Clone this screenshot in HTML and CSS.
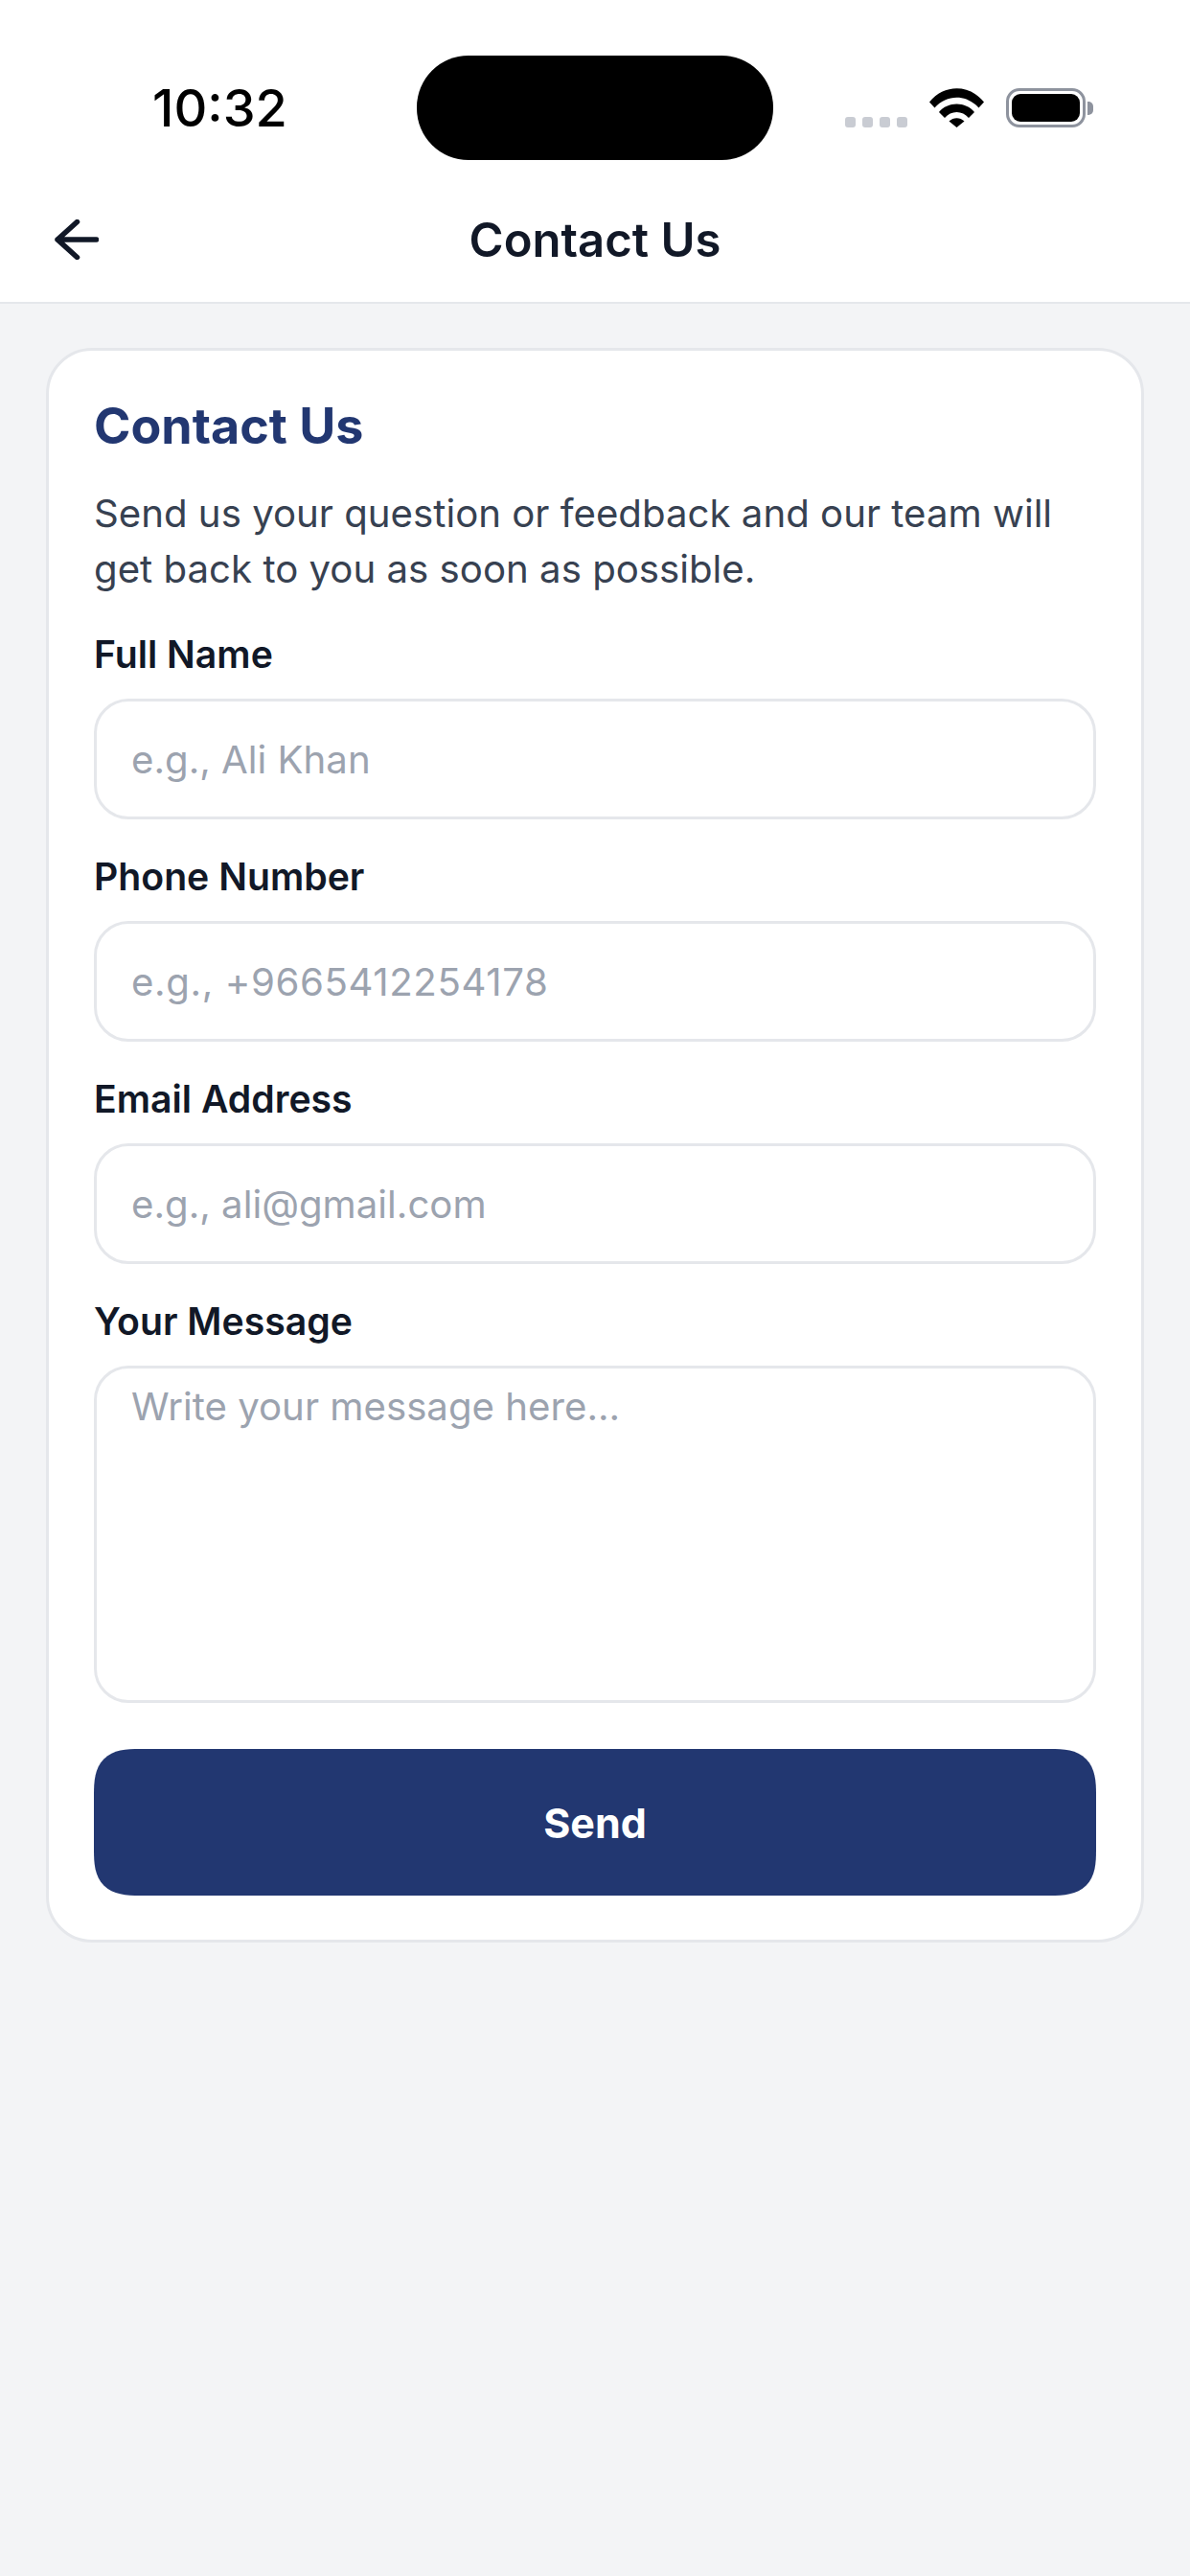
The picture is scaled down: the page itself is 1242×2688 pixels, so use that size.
FILE: index.html
```html
<!DOCTYPE html>
<html>
<head>
  <meta charset="UTF-8">
  <title>Contact Us</title>
  <link rel="stylesheet" href="styles.css">
</head>
<body>

  <div class="top-bar">
    <div class="status-bar">
      <div class="status-time">10:32</div>
      <div class="island"></div>
      <div class="status-icons">
        <div class="signal-dots">
          <span></span><span></span><span></span><span></span>
        </div>
        <svg class="wifi-icon" viewBox="0 0 57 41" width="57" height="41">
          <path d="M0 14.5 C15 -4.5 42 -4.5 57 14.5 L51.5 20.5 C39 6 18 6 5.5 20.5 Z" fill="#000"/>
          <path d="M10 25 C19 13.5 38 13.5 47 25 L41 31 C34.500 23 22.500 23 16 31 Z" fill="#000"/>
          <path d="M20.500 34.500 C25 30 32 30 36.500 34.500 L28.500 41 Z" fill="#000"/>
        </svg>
        <div class="battery">
          <div class="battery-body"><div class="battery-fill"></div></div>
          <div class="battery-tip"></div>
        </div>
      </div>
    </div>
    <div class="nav-bar">
      <svg class="back-icon" viewBox="0 0 46 42" width="46" height="42">
        <path d="M43.500 21 H3 M23.500 2.500 L3 21 L23.500 39.500" fill="none" stroke="#111827" stroke-width="5.500" stroke-linecap="round" stroke-linejoin="round"/>
      </svg>
      <h1>Contact Us</h1>
    </div>
  </div>

  <div class="content">
    <form class="card">
      <h2>Contact Us</h2>
      <p class="intro">Send us your question or feedback and our team will get back to you as soon as possible.</p>

      <div class="field">
        <label for="full-name">Full Name</label>
        <input type="text" id="full-name" placeholder="e.g., Ali Khan">
      </div>
      <div class="field">
        <label for="phone">Phone Number</label>
        <input type="text" id="phone" class="phone-input" placeholder="e.g., +9665412254178">
      </div>
      <div class="field">
        <label for="email">Email Address</label>
        <input type="text" id="email" placeholder="e.g., ali@gmail.com">
      </div>
      <div class="field">
        <label for="message">Your Message</label>
        <textarea id="message" placeholder="Write your message here..."></textarea>
      </div>

      <button type="button" class="send-button">Send</button>
    </form>
  </div>

</body>
</html>
```

FILE: styles.css
```css
:root {
  --navy: #223771;
  --ink: #111827;
  --body-text: #374151;
  --placeholder: #9ca3af;
  --border-color: #e5e7eb;
  --background-color: #f3f4f6;
}
* {
  box-sizing: border-box;
}
html, body {
  height: 100%;
}
body {
  margin: 0;
  font-family: Inter, "Noto Sans", sans-serif;
  background-color: var(--background-color);
  color: var(--ink);
}
.top-bar {
  background-color: #fff;
  border-bottom: 2px solid var(--border-color);
}
.status-bar {
  display: flex;
  align-items: flex-start;
  height: 185px;
  padding-top: 58px;
}
.status-time {
  width: 435px;
  padding-left: 159px;
  font-size: 54px;
  font-weight: 500;
  line-height: 109px;
  color: #000;
}
.island {
  width: 372px;
  height: 109px;
  border-radius: 54px;
  background-color: #000;
}
.status-icons {
  display: flex;
  align-items: flex-end;
  margin-top: 34px;
  margin-left: 75px;
}
.signal-dots {
  display: flex;
  gap: 7px;
  margin-right: 23px;
}
.signal-dots span {
  width: 11px;
  height: 11px;
  border-radius: 3px;
  background-color: #c9ccd3;
}
.wifi-icon {
  display: block;
  margin-right: 23px;
}
.battery {
  display: flex;
  align-items: center;
}
.battery-body {
  width: 83px;
  height: 41px;
  padding: 3px;
  border: 3px solid #8e939e;
  border-radius: 14px;
}
.battery-fill {
  height: 100%;
  border-radius: 9px;
  background-color: #000;
}
.battery-tip {
  width: 6px;
  height: 14px;
  margin-left: 2px;
  border-radius: 0 5px 5px 0;
  background-color: #8e939e;
}
.nav-bar {
  position: relative;
  display: flex;
  justify-content: center;
  align-items: center;
  height: 130px;
}
.nav-bar h1 {
  margin: 0;
  font-size: 49px;
  font-weight: 600;
}
.back-icon {
  position: absolute;
  left: 57px;
  top: 44px;
}
.content {
  padding: 46px 48px 48px;
}
.card {
  display: flex;
  flex-direction: column;
  padding: 46px 47px 46px;
  background-color: #fff;
  border: 3px solid var(--border-color);
  border-radius: 48px;
}
.card h2 {
  margin: 0;
  font-size: 52px;
  font-weight: 700;
  line-height: 66px;
  color: var(--navy);
}
.intro {
  margin: 29px 0 0;
  font-size: 40.2px;
  line-height: 58px;
  color: var(--body-text);
}
.field {
  display: flex;
  flex-direction: column;
  margin-top: 33px;
}
.field label {
  margin-bottom: 19px;
  font-size: 39.2px;
  font-weight: 600;
  line-height: 54px;
}
input[type="text"], textarea {
  width: 100%;
  height: 126px;
  padding: 0 36px;
  border: 3px solid var(--border-color);
  border-radius: 36px;
  font-family: inherit;
  font-size: 40.2px;
  color: var(--ink);
  background-color: #fff;
  outline: none;
}
.phone-input {
  letter-spacing: 0.6px;
}
textarea {
  display: block;
  height: 352px;
  padding: 15px 36px;
  resize: none;
}
::placeholder {
  color: var(--placeholder);
  opacity: 1;
}
.send-button {
  width: 100%;
  height: 153px;
  margin-top: 48px;
  border: none;
  border-radius: 48px;
  corner-shape: superellipse(1.5);
  background-color: var(--navy);
  color: #fff;
  font-family: inherit;
  font-size: 43px;
  font-weight: 700;
}
```
